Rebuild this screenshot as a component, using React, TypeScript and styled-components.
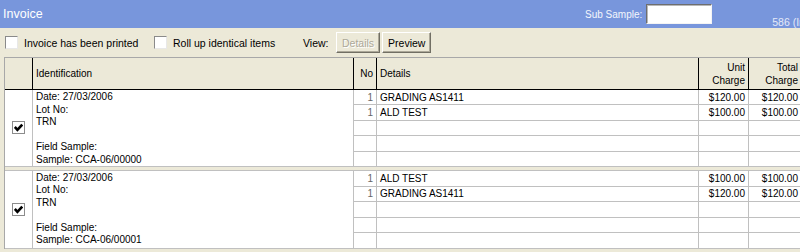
import styled, { createGlobalStyle } from "styled-components";

const COLS = "28px 321px 23px 322px 50px 53px";

type Item = { no: number; desc: string; unit: string; total: string };
type Sample = { date: string; lot: string; client: string; field: string; sample: string; items: Item[] };

const samples: Sample[] = [
  {
    date: "27/03/2006",
    lot: "",
    client: "TRN",
    field: "",
    sample: "CCA-06/00000",
    items: [
      { no: 1, desc: "GRADING AS1411", unit: "$120.00", total: "$120.00" },
      { no: 1, desc: "ALD TEST", unit: "$100.00", total: "$100.00" },
    ],
  },
  {
    date: "27/03/2006",
    lot: "",
    client: "TRN",
    field: "",
    sample: "CCA-06/00001",
    items: [
      { no: 1, desc: "ALD TEST", unit: "$100.00", total: "$100.00" },
      { no: 1, desc: "GRADING AS1411", unit: "$120.00", total: "$120.00" },
    ],
  },
];

const ROWS = 5;

export default function App() {
  return (
    <>
      <GlobalStyle />
      <TitleBar>
        <Title>Invoice</Title>
        <SubLabel>Sub Sample:</SubLabel>
        <SubInput type="text" />
        <Count>586 (Invoices)</Count>
      </TitleBar>
      <Toolbar>
        <CheckOption $width={149}>
          <Box />
          Invoice has been printed
        </CheckOption>
        <CheckOption $width={149}>
          <Box />
          Roll up identical items
        </CheckOption>
        <ViewLabel>View:</ViewLabel>
        <Button disabled>Details</Button>
        <Button>Preview</Button>
      </Toolbar>
      <Grid>
        <HeadRow>
          <HeadCell />
          <HeadCell>Identification</HeadCell>
          <HeadCell $right>No</HeadCell>
          <HeadCell>Details</HeadCell>
          <HeadCell $right>
            Unit
            <br />
            Charge
          </HeadCell>
          <HeadCell $right>
            Total
            <br />
            Charge
          </HeadCell>
        </HeadRow>
        {samples.map((s, i) => (
          <Group key={i}>
            <CheckCell>
              <Box $tight>
                <svg width="9" height="9" viewBox="0 0 9 9">
                  <path d="M0.8 4 L3.4 6.8 L8.2 1.6" fill="none" stroke="#000" strokeWidth="2.6" />
                </svg>
              </Box>
            </CheckCell>
            <IdCell>
              <div>Date: {s.date}</div>
              <div>Lot No: {s.lot}</div>
              <div>{s.client}</div>
              <div>&nbsp;</div>
              <div>Field Sample: {s.field}</div>
              <div>Sample: {s.sample}</div>
            </IdCell>
            {Array.from({ length: ROWS }).map((_, r) => {
              const it = s.items[r];
              return [
                <Cell key={`n${r}`} $right $dim>
                  {it ? it.no : ""}
                </Cell>,
                <Cell key={`d${r}`}>{it ? it.desc : ""}</Cell>,
                <Cell key={`u${r}`} $right>
                  {it ? it.unit : ""}
                </Cell>,
                <Cell key={`t${r}`} $right>
                  {it ? it.total : ""}
                </Cell>,
              ];
            })}
          </Group>
        ))}
      </Grid>
    </>
  );
}

const GlobalStyle = createGlobalStyle`
  html, body {
    margin: 0;
    padding: 0;
  }
  body {
    width: 800px;
    height: 252px;
    overflow: hidden;
    background: #ece9d8;
    font-family: "Liberation Sans", Arial, sans-serif;
    font-size: 10px;
    color: #000;
  }
`;

const TitleBar = styled.div`
  height: 28px;
  background: #7896dc;
  display: flex;
  align-items: center;
  padding-left: 3px;
  white-space: nowrap;
  overflow: hidden;

  & > * {
    flex-shrink: 0;
  }
`;

const Title = styled.div`
  width: 582px;
  color: #fff;
  font-size: 12.5px;
`;

const SubLabel = styled.span`
  color: #f4f6fc;
  font-size: 10px;
`;

const SubInput = styled.input`
  box-sizing: border-box;
  width: 66px;
  height: 20px;
  margin: 0 0 0 4px;
  padding: 0;
  background: #fff;
  border: 1px solid;
  border-color: #6e6e6e #f4f4f4 #f4f4f4 #6e6e6e;
  box-shadow: inset 1px 1px 0 #b8b8b8;
`;

const Count = styled.span`
  align-self: flex-end;
  margin-left: 60px;
  padding-bottom: 0;
  color: #e4e9f8;
  font-size: 10.5px;
`;

const Toolbar = styled.div`
  height: 29px;
  display: flex;
  align-items: center;
  padding-left: 5px;
  font-size: 10.5px;
  white-space: nowrap;
`;

const CheckOption = styled.label<{ $width: number }>`
  width: ${(p) => p.$width}px;
  display: flex;
  align-items: center;
  gap: 6px;
`;

const Box = styled.span<{ $tight?: boolean }>`
  box-sizing: border-box;
  width: 13px;
  height: 13px;
  display: inline-flex;
  align-items: center;
  justify-content: center;
  background: #fff;
  border: 1px solid;
  border-color: ${(p) => (p.$tight ? "#8c8c8c" : "#8a8a8a #e8e8e8 #e8e8e8 #8a8a8a")};
`;

const ViewLabel = styled.span`
  width: 33px;
`;

const Button = styled.button`
  box-sizing: border-box;
  height: 21px;
  padding: 0 5px;
  margin-right: 2px;
  background: #ece9d8;
  font-family: "Liberation Sans", Arial, sans-serif;
  font-size: 10.5px;
  color: #000;
  border: 1px solid;
  border-color: #fff #716f64 #716f64 #fff;
  box-shadow: inset -1px -1px 0 #aca899;

  &:disabled {
    color: #aca899;
    text-shadow: 1px 1px 0 #fff;
  }
`;

const Grid = styled.div`
  margin-left: 4px;
  border-left: 1px solid #a8a8a8;
  border-top: 1px solid #a8a8a8;
`;

const HeadRow = styled.div`
  display: grid;
  grid-template-columns: ${COLS};
  height: 32px;
  border-bottom: 1px solid #000;
  box-sizing: border-box;
  background: #ece9d8;
`;

const HeadCell = styled.div<{ $right?: boolean }>`
  border-right: 1px solid #000;
  display: flex;
  align-items: center;
  justify-content: ${(p) => (p.$right ? "flex-end" : "flex-start")};
  text-align: ${(p) => (p.$right ? "right" : "left")};
  padding: 0 3px;
  line-height: 13px;
  white-space: nowrap;
  overflow: hidden;
`;

const Group = styled.div`
  display: grid;
  grid-template-columns: ${COLS};
  grid-template-rows: repeat(${ROWS}, 15.4px);
  background: #fff;

  & + & {
    margin-top: 3px;
    border-top: 1px solid #c0c0c0;
    grid-template-rows: repeat(${ROWS}, 15.6px);
  }
`;

const Cell = styled.div<{ $right?: boolean; $dim?: boolean }>`
  border-right: 1px solid #c0c0c0;
  border-bottom: 1px solid #c0c0c0;
  display: flex;
  align-items: center;
  justify-content: ${(p) => (p.$right ? "flex-end" : "flex-start")};
  padding: 0 3px;
  color: ${(p) => (p.$dim ? "#666" : "#000")};
  white-space: nowrap;
  overflow: hidden;
`;

const CheckCell = styled(Cell)`
  grid-column: 1;
  grid-row: 1 / span ${ROWS};
  justify-content: center;
`;

const IdCell = styled.div`
  grid-column: 2;
  grid-row: 1 / span ${ROWS};
  border-right: 1px solid #c0c0c0;
  border-bottom: 1px solid #c0c0c0;
  padding: 1px 3px 0;
  line-height: 12.5px;
  white-space: nowrap;
  overflow: hidden;
`;
